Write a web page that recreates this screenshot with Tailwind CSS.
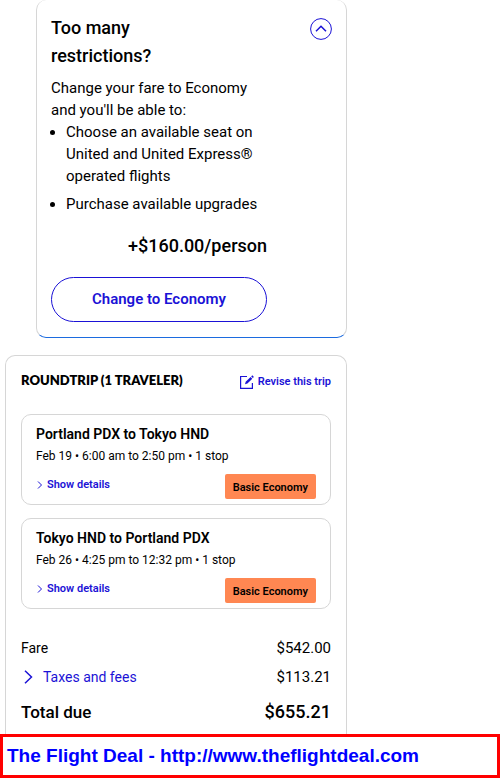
<!DOCTYPE html>
<html lang="en">

<head>
  <meta charset="UTF-8">
  <meta name="viewport" content="width=device-width, initial-scale=1.0">
  <title>Trip summary</title>
  <script src="https://cdn.jsdelivr.net/npm/@tailwindcss/browser@4"></script>
</head>

<body class="bg-white text-black font-['Roboto',sans-serif]">
  <main class="w-full max-w-[347px] pl-[5px]">
    <!-- Fare upgrade -->
    <section class="ml-[31px] rounded-[10px] border border-t-0 border-[#d6d6d6] border-b-[#1c6bdf] px-[14px] pt-[14px] pb-[15px]">
      <div class="flex items-start justify-between">
        <h2 class="w-28 text-lg leading-7 font-medium">Too many restrictions?</h2>
        <button type="button" aria-label="Collapse" class="mt-1 text-[#1b12d6]">
          <svg class="size-[22px]" viewBox="0 0 22 22" fill="none" stroke="currentColor">
            <circle cx="11" cy="11" r="10.4" />
            <path d="M6 13.2 11 8.2l5 5" stroke-width="1.5" />
          </svg>
        </button>
      </div>
      <div class="mt-[7px] w-full max-w-[216px]">
        <p class="text-[15px] leading-[22px]">Change your fare to Economy and you'll be able to:</p>
        <ul class="list-disc space-y-[6px] pl-[15px] text-[15px] leading-[22px]">
          <li>Choose an available seat on United and United Express® operated flights</li>
          <li>Purchase available upgrades</li>
        </ul>
        <p class="mt-[17px] text-right text-lg leading-7 font-medium">+$160.00/person</p>
        <button type="button" class="mt-[17px] h-[45px] w-full rounded-full border border-[#1b12d6] text-[15px] font-semibold text-[#1b12d6]">Change to Economy</button>
      </div>
    </section>

    <!-- Trip -->
    <section class="mt-[17px] rounded-t-[10px] border border-b-0 border-[#d6d6d6] px-[15px] pt-[14px] pb-2">
      <div class="flex items-start justify-between">
        <h2 class="font-['Lato',sans-serif] text-[13px] leading-5 font-extrabold">ROUNDTRIP (1 TRAVELER)</h2>
        <a href="#" class="mt-[2px] flex items-center gap-1 text-[11px] leading-5 font-semibold text-[#1b12d6]">
          <svg class="size-[14px]" viewBox="0 0 14 14" fill="none" stroke="currentColor">
            <path d="M7 1.5H.6v11.9h11.8V8" stroke-width="1.2" />
            <path d="m5 9.2.7-2.5L10.6 2l1.7 1.7-4.9 4.8z" fill="currentColor" stroke="none" />
            <path d="m11.2 1.4 1.1-1.1 1.6 1.6-1.1 1.1z" fill="currentColor" stroke="none" />
          </svg>
          Revise this trip
        </a>
      </div>

      <article class="mt-[22px] rounded-[10px] border border-[#d6d6d6] px-[14px] pt-2 pb-[5px]">
        <h3 class="text-[14px] leading-[22px] font-semibold">Portland PDX to Tokyo HND</h3>
        <p class="text-[12px] leading-[22px]">Feb 19 • 6:00 am to 2:50 pm • 1 stop</p>
        <div class="mt-[7px] flex items-start justify-between">
          <a href="#" class="flex items-center gap-1 pl-px text-[11px] leading-[22px] font-semibold text-[#1b12d6]">
            <svg class="h-2 w-[6px]" viewBox="0 0 6 8" fill="none" stroke="currentColor">
              <path d="m1 .5 3.5 3.5L1 7.5" />
            </svg>
            Show details
          </a>
          <span class="rounded-[2px] bg-[#ff8752] px-2 pt-[2px] text-[11px] leading-[23px] font-semibold">Basic Economy</span>
        </div>
      </article>

      <article class="mt-[13px] rounded-[10px] border border-[#d6d6d6] px-[14px] pt-2 pb-[5px]">
        <h3 class="text-[14px] leading-[22px] font-semibold">Tokyo HND to Portland PDX</h3>
        <p class="text-[12px] leading-[22px]">Feb 26 • 4:25 pm to 12:32 pm • 1 stop</p>
        <div class="mt-[7px] flex items-start justify-between">
          <a href="#" class="flex items-center gap-1 pl-px text-[11px] leading-[22px] font-semibold text-[#1b12d6]">
            <svg class="h-2 w-[6px]" viewBox="0 0 6 8" fill="none" stroke="currentColor">
              <path d="m1 .5 3.5 3.5L1 7.5" />
            </svg>
            Show details
          </a>
          <span class="rounded-[2px] bg-[#ff8752] px-2 pt-[2px] text-[11px] leading-[23px] font-semibold">Basic Economy</span>
        </div>
      </article>

      <!-- Price -->
      <dl class="mt-7 text-[15px]">
        <div class="flex justify-between leading-[22px]">
          <dt class="text-[14px]">Fare</dt>
          <dd>$542.00</dd>
        </div>
        <div class="mt-[7px] flex justify-between leading-[22px]">
          <dt class="text-[14px]">
            <a href="#" class="flex items-center gap-[10px] pl-[3px] text-[#1b12d6]">
              <svg class="h-[14px] w-[9px]" viewBox="0 0 9 14" fill="none" stroke="currentColor" stroke-width="1.5">
                <path d="m1 .7 6.5 6.3L1 13.3" />
              </svg>
              Taxes and fees
            </a>
          </dt>
          <dd>$113.21</dd>
        </div>
        <div class="mt-[10px] flex justify-between leading-7 font-medium">
          <dt class="text-[17px]">Total due</dt>
          <dd class="text-[18px]">$655.21</dd>
        </div>
      </dl>
    </section>
  </main>

  <footer class="border-[3px] border-[#ff0000] px-1 font-['Liberation_Sans',sans-serif] text-[19px] leading-[38px] font-bold text-[#0000ff]">The Flight Deal - http://www.theflightdeal.com</footer>
</body>

</html>
